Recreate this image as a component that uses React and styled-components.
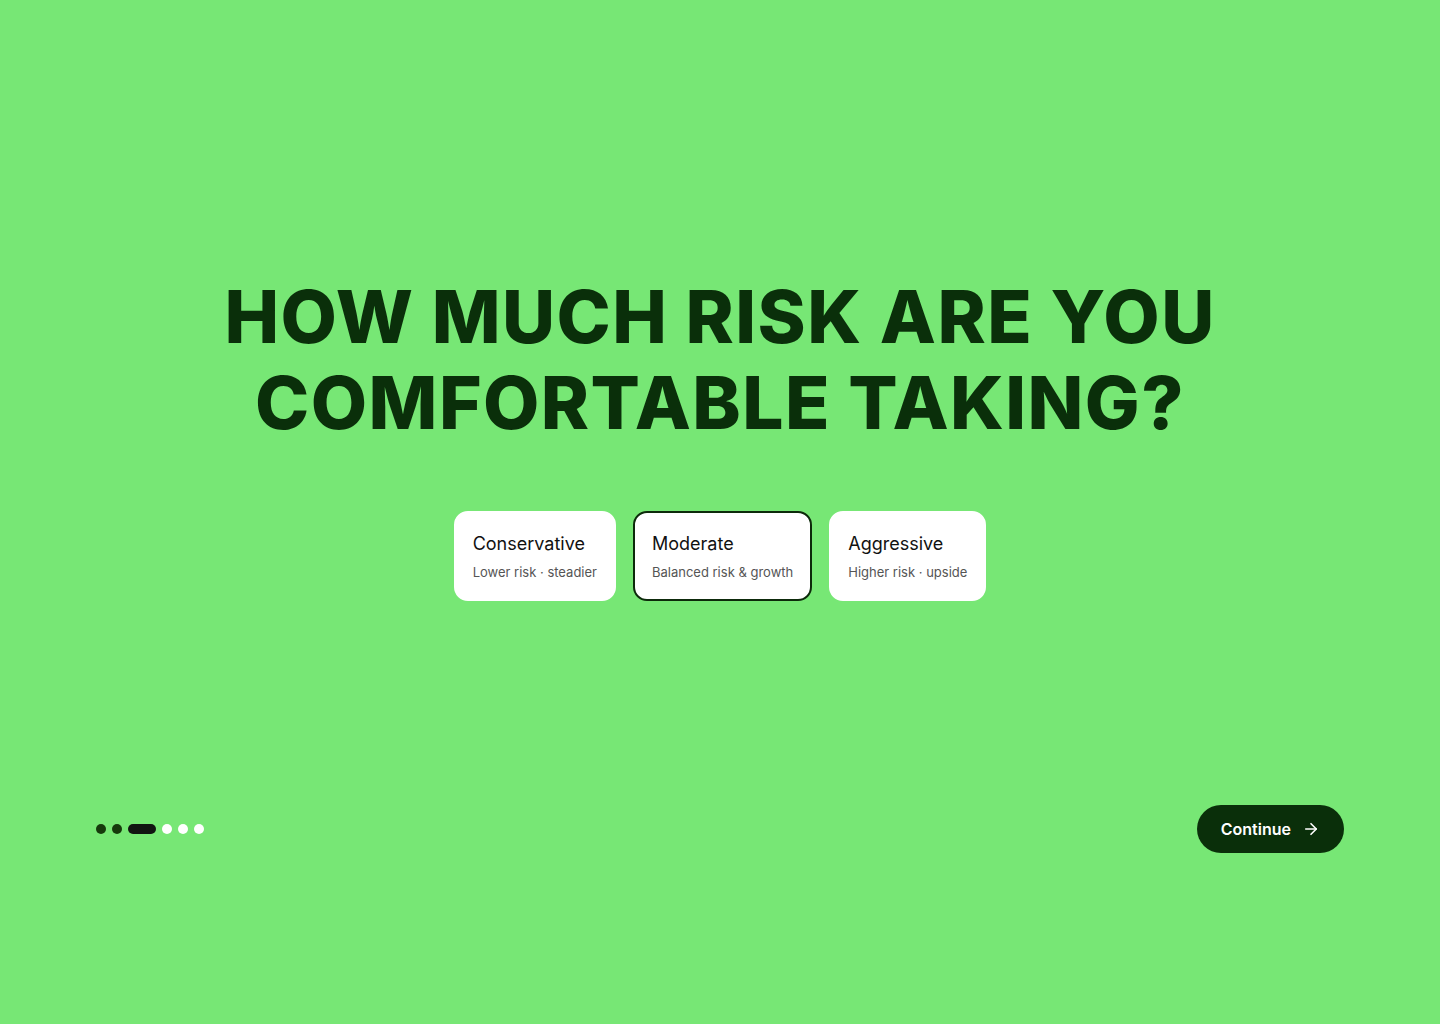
import React, { useState } from 'react';
import styled, { createGlobalStyle } from 'styled-components';

const Global = createGlobalStyle`
  html, body { margin: 0; padding: 0; }
  body {
    background: #77e775;
    font-family: Inter, "Noto Sans", sans-serif;
    -webkit-font-smoothing: antialiased;
  }
`;

const options = [
  { id: 'conservative', title: 'Conservative', sub: 'Lower risk · steadier' },
  { id: 'moderate', title: 'Moderate', sub: 'Balanced risk & growth' },
  { id: 'aggressive', title: 'Aggressive', sub: 'Higher risk · upside' },
];

const steps = ['done', 'done', 'current', 'todo', 'todo', 'todo'];

function App() {
  const [picked, setPicked] = useState('moderate');

  return (
    <>
      <Global />
      <Page>
        <Main>
          <Heading>
            How much risk are you
            <br />
            comfortable taking?
          </Heading>
          <Choices>
            {options.map((o) => (
              <Choice key={o.id} $active={picked === o.id} onClick={() => setPicked(o.id)}>
                <ChoiceTitle>{o.title}</ChoiceTitle>
                <ChoiceSub>{o.sub}</ChoiceSub>
              </Choice>
            ))}
          </Choices>
        </Main>
        <Footer>
          <Progress>
            {steps.map((s, i) => (
              <Dot key={i} $state={s} />
            ))}
          </Progress>
          <ContinueBtn>
            Continue
            <svg width="18" height="18" viewBox="0 0 24 24" fill="none" stroke="currentColor" strokeWidth="2.2" strokeLinecap="round" strokeLinejoin="round">
              <path d="M5 12h14" />
              <path d="M12 5l7 7-7 7" />
            </svg>
          </ContinueBtn>
        </Footer>
      </Page>
    </>
  );
}

const Page = styled.div`
  height: 1024px;
  display: flex;
  flex-direction: column;
  box-sizing: border-box;
  padding: 0 96px 171px;
`;

const Main = styled.main`
  flex: 1;
  display: flex;
  flex-direction: column;
  align-items: center;
  padding-top: 274px;
`;

const Heading = styled.h1`
  margin: 0;
  font-size: 73px;
  line-height: 86px;
  font-weight: 800;
  letter-spacing: 1.4px;
  text-transform: uppercase;
  text-align: center;
  color: #0a2f0a;
`;

const Choices = styled.div`
  display: flex;
  gap: 17px;
  margin-top: 65px;
`;

const Choice = styled.button`
  display: flex;
  flex-direction: column;
  align-items: flex-start;
  justify-content: center;
  gap: 9px;
  box-sizing: border-box;
  height: 90px;
  padding: 0 17px;
  background: #fff;
  border: 2px solid ${(p) => (p.$active ? '#0d2a0b' : '#fff')};
  border-radius: 14px;
  font-family: inherit;
  cursor: pointer;
`;

const ChoiceTitle = styled.span`
  font-size: 18px;
  line-height: 22px;
  color: #111;
`;

const ChoiceSub = styled.span`
  font-size: 13px;
  line-height: 16px;
  color: #555;
`;

const Footer = styled.div`
  display: flex;
  align-items: center;
  justify-content: space-between;
  height: 48px;
`;

const Progress = styled.div`
  display: flex;
  gap: 6px;
  align-items: center;
`;

const Dot = styled.span`
  width: ${(p) => (p.$state === 'current' ? '28px' : '10px')};
  height: 10px;
  border-radius: 5px;
  background: ${(p) =>
    p.$state === 'current' ? '#111511' : p.$state === 'done' ? '#163a0c' : '#fff'};
`;

const ContinueBtn = styled.button`
  display: flex;
  align-items: center;
  gap: 11px;
  height: 48px;
  padding: 0 24px;
  border: none;
  border-radius: 24px;
  background: #0a2f0a;
  color: #fff;
  font-family: inherit;
  font-size: 16px;
  font-weight: 600;
  cursor: pointer;
`;

export default App;
